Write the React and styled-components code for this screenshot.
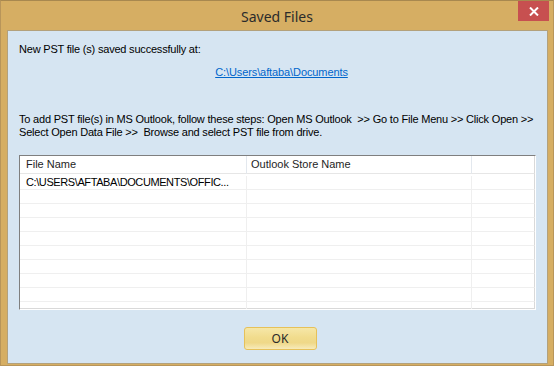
import React from 'react';
import styled, { createGlobalStyle } from 'styled-components';

const GlobalStyle = createGlobalStyle`
  html, body {
    margin: 0;
    padding: 0;
    background: #ffffff;
  }
`;

const Window = styled.div`
  width: 554px;
  height: 366px;
  box-sizing: border-box;
  background: #d6ae63;
  border: 1px solid #b8955a;
  border-top-color: #a8884f;
  display: flex;
  flex-direction: column;
`;

const TitleBar = styled.div`
  height: 29px;
  display: grid;
  grid-template-columns: 1fr auto 1fr;
  align-items: start;
`;

const Title = styled.div`
  grid-column: 2;
  padding-top: 6px;
  font-family: "Noto Sans", "Open Sans", sans-serif;
  font-size: 14px;
  line-height: 19px;
  color: #2b2b2b;
`;

const CloseButton = styled.div`
  grid-column: 3;
  justify-self: end;
  margin-right: 4px;
  width: 31px;
  height: 20px;
  background: #c75050;
  display: flex;
  align-items: center;
  justify-content: center;
`;

const Client = styled.div`
  margin-left: 6px;
  width: 541px;
  height: 334px;
  box-sizing: border-box;
  background: #d6e5f2;
  border: 1px solid #b3a17c;
  padding: 12px 11px 0 11px;
  font-family: "Liberation Sans", Arial, sans-serif;
  font-size: 11px;
  line-height: 13px;
  color: #000;
  display: flex;
  flex-direction: column;
`;

const Message = styled.div`
  margin-top: ${(p) => p.$top || 0}px;
  white-space: nowrap;
  letter-spacing: -0.2px;
`;

const PathLink = styled.a`
  display: block;
  margin-top: 10px;
  padding-left: 8px;
  text-align: center;
  color: #0066cc;
  text-decoration: underline;
  letter-spacing: -0.1px;
`;

const ListBox = styled.div`
  margin-top: 16px;
  height: 155px;
  box-sizing: border-box;
  background: #ffffff;
  border: 1px solid;
  border-color: #7f7f7f #ffffff #ffffff #7f7f7f;
  box-shadow: inset -1px -1px 0 #d9d9d9;
  overflow: hidden;
`;

const ListGrid = styled.div`
  display: grid;
  grid-template-columns: 227px 225px 1fr;
`;

const HeaderCell = styled.div`
  height: 17px;
  line-height: 17px;
  padding-left: ${(p) => p.$pad}px;
  border-right: 1px solid ${(p) => (p.$last ? 'transparent' : '#e3e8ee')};
  border-bottom: 1px solid #e6e6e6;
  margin-bottom: 2px;
  font-family: "Liberation Sans", Arial, sans-serif;
  font-size: 11px;
  color: #1e1e1e;
  white-space: nowrap;
  overflow: hidden;
`;

const Cell = styled.div`
  height: 13px;
  line-height: 13px;
  padding-left: ${(p) => p.$pad}px;
  border-right: 1px solid ${(p) => (p.$last ? 'transparent' : '#efefef')};
  border-bottom: 1px solid #efefef;
  white-space: nowrap;
  overflow: hidden;
  font-size: 11px;
  letter-spacing: -0.4px;
`;

const Footer = styled.div`
  display: flex;
  justify-content: center;
  padding-top: 17px;
`;

const OkButton = styled.button`
  width: 73px;
  height: 23px;
  box-sizing: border-box;
  border: 1px solid #e6c15a;
  border-radius: 3px;
  background: linear-gradient(#f6e7a8 0%, #f1dc8d 45%, #efd888 70%, #f7ebbb 100%);
  font-family: "Noto Sans", "Open Sans", sans-serif;
  font-size: 12px;
  color: #2a2a2a;
  padding: 0;
  margin-left: 5px;
`;

const rows = [
  ['C:\\USERS\\AFTABA\\DOCUMENTS\\OFFIC...', ''],
  ...Array.from({ length: 9 }, () => ['', '']),
];

const App = () => {
  return (
    <>
      <GlobalStyle />
      <Window>
        <TitleBar>
          <Title>Saved Files</Title>
          <CloseButton>
            <svg width="10" height="9" viewBox="0 0 10 9">
              <path d="M1 0.5 L9 8.5 M9 0.5 L1 8.5" stroke="#fff" strokeWidth="2" />
            </svg>
          </CloseButton>
        </TitleBar>
        <Client>
          <Message>New PST file (s) saved successfully at:</Message>
          <PathLink href="#">C:\Users\aftaba\Documents</PathLink>
          <Message $top={34}>
            To add PST file(s) in MS Outlook, follow these steps: Open MS Outlook&nbsp; &gt;&gt; Go to File Menu &gt;&gt; Click Open &gt;&gt;
            <br />
            Select Open Data File &gt;&gt;&nbsp; Browse and select PST file from drive.
          </Message>
          <ListBox>
            <ListGrid>
              <HeaderCell $pad={6}>File Name</HeaderCell>
              <HeaderCell $pad={4}>Outlook Store Name</HeaderCell>
              <HeaderCell $pad={4} $last />
              {rows.map((r, i) => (
                <React.Fragment key={i}>
                  <Cell $pad={6}>{r[0]}</Cell>
                  <Cell $pad={4}>{r[1]}</Cell>
                  <Cell $pad={4} $last />
                </React.Fragment>
              ))}
            </ListGrid>
          </ListBox>
          <Footer>
            <OkButton>OK</OkButton>
          </Footer>
        </Client>
      </Window>
    </>
  );
};

export default App;
